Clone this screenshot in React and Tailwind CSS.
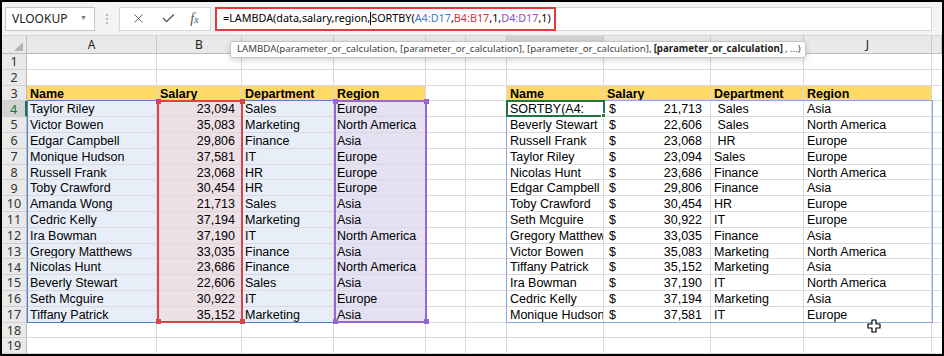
import { X, Check } from "lucide-react";

const names = ["Taylor Riley", "Victor Bowen", "Edgar Campbell", "Monique Hudson", "Russell Frank", "Toby Crawford", "Amanda Wong", "Cedric Kelly", "Ira Bowman", "Gregory Matthews", "Nicolas Hunt", "Beverly Stewart", "Seth Mcguire", "Tiffany Patrick"];
const salaries = ["23,094", "35,083", "29,806", "37,581", "23,068", "30,454", "21,713", "37,194", "37,190", "33,035", "23,686", "22,606", "30,922", "35,152"];
const depts = ["Sales", "Marketing", "Finance", "IT", "HR", "HR", "Sales", "Marketing", "IT", "Finance", "Finance", "Sales", "IT", "Marketing"];
const regions = ["Europe", "North America", "Asia", "Europe", "Europe", "Europe", "Asia", "Asia", "North America", "Asia", "North America", "Asia", "Europe", "Asia"];

const sNames = ["SORTBY(A4:", "Beverly Stewart", "Russell Frank", "Taylor Riley", "Nicolas Hunt", "Edgar Campbell", "Toby Crawford", "Seth Mcguire", "Gregory Matthews", "Victor Bowen", "Tiffany Patrick", "Ira Bowman", "Cedric Kelly", "Monique Hudson"];
const sSalaries = ["21,713", "22,606", "23,068", "23,094", "23,686", "29,806", "30,454", "30,922", "33,035", "35,083", "35,152", "37,190", "37,194", "37,581"];
const sDepts = [" Sales", " Sales", " HR", "Sales", "Finance", "Finance", "HR", "IT", "Finance", "Marketing", "Marketing", "IT", "Marketing", "IT"];
const sRegions = ["Asia", "North America", "Europe", "Europe", "North America", "Asia", "Europe", "Europe", "Asia", "North America", "Asia", "North America", "Asia", "Europe"];

// C..I sit under the function tooltip, so their letters never show
const letters = ["A", "B", "", "", "", "", "", "", "", "J", ""];
const gridCols = "grid grid-cols-[25px_130px_85px_92px_92px_40px_41px_97px_107px_93px_128px_10px]";

function Cell({ children, className = "" }) {
  return (
    <div className={"h-[15.8px] border-r border-b border-[#dadada] overflow-hidden whitespace-pre text-[12.5px] leading-[15px] pt-[1px] px-[3px] text-black " + className}>
      {children}
    </div>
  );
}

function Handle({ className }) {
  return <div className={"absolute w-[5px] h-[5px] " + className} />;
}

function Row({ r }) {
  const i = r - 4;
  const data = r >= 4 && r <= 17;
  const header = r === 3;
  const active = r === 4;
  const cells = [];

  for (let c = 1; c <= 11; c++) {
    let content = null;
    let cls = "";
    if (header && ((c >= 1 && c <= 4) || (c >= 7 && c <= 10))) {
      cls = "bg-[#ffd966] font-bold";
      content = ["", "Name", "Salary", "Department", "Region", "", "", "Name", "Salary", "Department", "Region"][c];
    } else if (data) {
      if (c === 1) { cls = "bg-[#e8eef8]"; content = names[i]; }
      if (c === 2) { cls = "bg-[#eee0e7] text-right pr-[6px]"; content = salaries[i]; }
      if (c === 3) { cls = "bg-[#e8eef8]"; content = depts[i]; }
      if (c === 4) { cls = "bg-[#e3e1f2]"; content = regions[i]; }
      if (c === 7) { content = sNames[i]; }
      if (c === 8) {
        cls = "flex justify-between pl-[5px] pr-[8px]";
        content = (
          <>
            <span>$</span>
            <span>{sSalaries[i]}</span>
          </>
        );
      }
      if (c === 9) { content = sDepts[i]; }
      if (c === 10) { content = sRegions[i]; }
    }
    if (c === 11) cls += " border-r-0";
    cells.push(<Cell key={c} className={cls}>{content}</Cell>);
  }

  return (
    <>
      <div
        className={
          "h-[15.8px] border-b border-[#d0d0d0] flex items-center justify-center pt-[2px] text-[12.5px] leading-none font-['Noto_Sans'] " +
          (active ? "bg-[#d3d3d3] text-[#217346] border-r-2 border-r-[#217346]" : "bg-[#e9e9e9] text-[#333] border-r border-r-[#bdbdbd]")
        }
      >
        {r}
      </div>
      {cells}
    </>
  );
}

export default function App() {
  const rows = Array.from({ length: 19 }, (_, k) => k + 1);

  return (
    <div className="relative w-[944px] h-[356px] border-2 border-black bg-white overflow-hidden font-['Liberation_Sans',Arial,sans-serif]">
      {/* formula bar */}
      <div className="h-[34px] bg-[#f3f3f3] flex items-center border-b border-[#d4d4d4] font-['Noto_Sans',sans-serif]">
        <div className="ml-[3px] w-[90px] h-[24px] bg-white border border-[#c6c6c6] flex items-center justify-between pl-[6px] pr-[7px]">
          <span className="text-[12px] text-[#222]">VLOOKUP</span>
          <span className="text-[7px] text-[#777]">▼</span>
        </div>
        <div className="w-[24px] flex flex-col items-center gap-[2px]">
          <span className="w-[2px] h-[2px] bg-[#b8b8b8]" />
          <span className="w-[2px] h-[2px] bg-[#b8b8b8]" />
          <span className="w-[2px] h-[2px] bg-[#b8b8b8]" />
        </div>
        <div className="w-[92px] h-[24px] bg-white border border-[#d6d6d6] flex items-center justify-around px-[4px] text-[#555]">
          <X size={15} strokeWidth={1.4} />
          <Check size={15} strokeWidth={2.2} />
          <span className="font-['Liberation_Serif',serif] italic text-[14px] leading-none">
            f<span className="text-[10px]">x</span>
          </span>
        </div>
        <div className="ml-[4px] mr-[10px] flex-1 h-[24px] bg-white border border-[#d6d6d6] flex items-center">
          <div className="h-[24px] -ml-[1px] w-[341px] border-2 border-[#e5383b] flex items-center pl-[6px] text-[10.8px] text-black whitespace-pre">
            <span>=LAMBDA(data,salary,region,</span>
            <span className="w-px h-[13px] bg-black" />
            <span>SORTBY(</span>
            <span className="text-[#3f78c9]">A4:D17</span>
            <span>,</span>
            <span className="text-[#d6333f]">B4:B17</span>
            <span>,1,</span>
            <span className="text-[#8a4fc7]">D4:D17</span>
            <span>,1)</span>
          </div>
        </div>
      </div>

      {/* column headers */}
      <div className={gridCols + " h-[18px] bg-[#e9e9e9] border-b border-[#bdbdbd] font-['Noto_Sans',sans-serif] text-[12px] text-[#222]"}>
        <div className="relative border-r border-[#bdbdbd]">
          <div className="absolute right-[3px] bottom-[3px] w-0 h-0 border-l-[9px] border-l-transparent border-b-[9px] border-b-[#b5b5b5]" />
        </div>
        {letters.map((l, k) => (
          <div
            key={k}
            className={
              "flex items-center justify-center border-r border-[#c8c8c8] " +
              (k === 6 ? "bg-[#d3d3d3] border-b-2 border-b-[#217346]" : "")
            }
          >
            {l}
          </div>
        ))}
      </div>

      {/* sheet */}
      <div className="relative">
        <div className={gridCols}>
          {rows.map((r) => (
            <Row key={r} r={r} />
          ))}
        </div>

        {/* range highlights */}
        <div className="absolute left-[25px] top-[46.4px] w-[400px] h-[222.2px] border border-[#4f83cc]" />
        <div className="absolute left-[155px] top-[46.4px] w-[86px] h-[222.2px] border-2 border-[#d9434c]">
          <Handle className="-left-[3.5px] -top-[3.5px] bg-[#d9434c]" />
          <Handle className="-right-[3.5px] -top-[3.5px] bg-[#d9434c]" />
          <Handle className="-left-[3.5px] -bottom-[3.5px] bg-[#d9434c]" />
          <Handle className="-right-[3.5px] -bottom-[3.5px] bg-[#d9434c]" />
        </div>
        <div className="absolute left-[332px] top-[46.4px] w-[93px] h-[222.2px] border-2 border-[#9567cf]">
          <Handle className="-left-[3.5px] -top-[3.5px] bg-[#9567cf]" />
          <Handle className="-right-[3.5px] -top-[3.5px] bg-[#9567cf]" />
          <Handle className="-left-[3.5px] -bottom-[3.5px] bg-[#9567cf]" />
          <Handle className="-right-[3.5px] -bottom-[3.5px] bg-[#9567cf]" />
        </div>
        <div className="absolute left-[504px] top-[46.4px] w-[427px] h-[222.2px] border border-[#86a9dc]" />
        <div className="absolute left-[504px] top-[46.4px] w-[99px] h-[16.8px] border-2 border-[#217346]">
          <div className="absolute -right-[3px] -bottom-[3px] w-[5px] h-[5px] bg-[#217346] border border-white" />
        </div>

        {/* cursor */}
        <svg className="absolute left-[865px] top-[265px]" width="14" height="14" viewBox="0 0 14 14">
          <path
            d="M5 1h4v4h4v4h-4v4H5V9H1V5h4z"
            fill="white"
            stroke="black"
            strokeWidth="1.2"
            strokeLinejoin="round"
          />
        </svg>
      </div>

      {/* function tooltip */}
      <div className="absolute left-[228px] top-[39px] h-[17px] w-[576px] px-[6px] bg-white border border-[#c6c6c6] rounded-[3px] shadow-[0_2px_6px_rgba(0,0,0,0.18)] flex items-center whitespace-nowrap font-['Noto_Sans',sans-serif] text-[9.7px] text-[#444]">
        LAMBDA(parameter_or_calculation, [parameter_or_calculation], [parameter_or_calculation],{" "}
        <span className="font-bold text-[#222] px-[2px]">[parameter_or_calculation]</span>, ...)
      </div>
    </div>
  );
}
